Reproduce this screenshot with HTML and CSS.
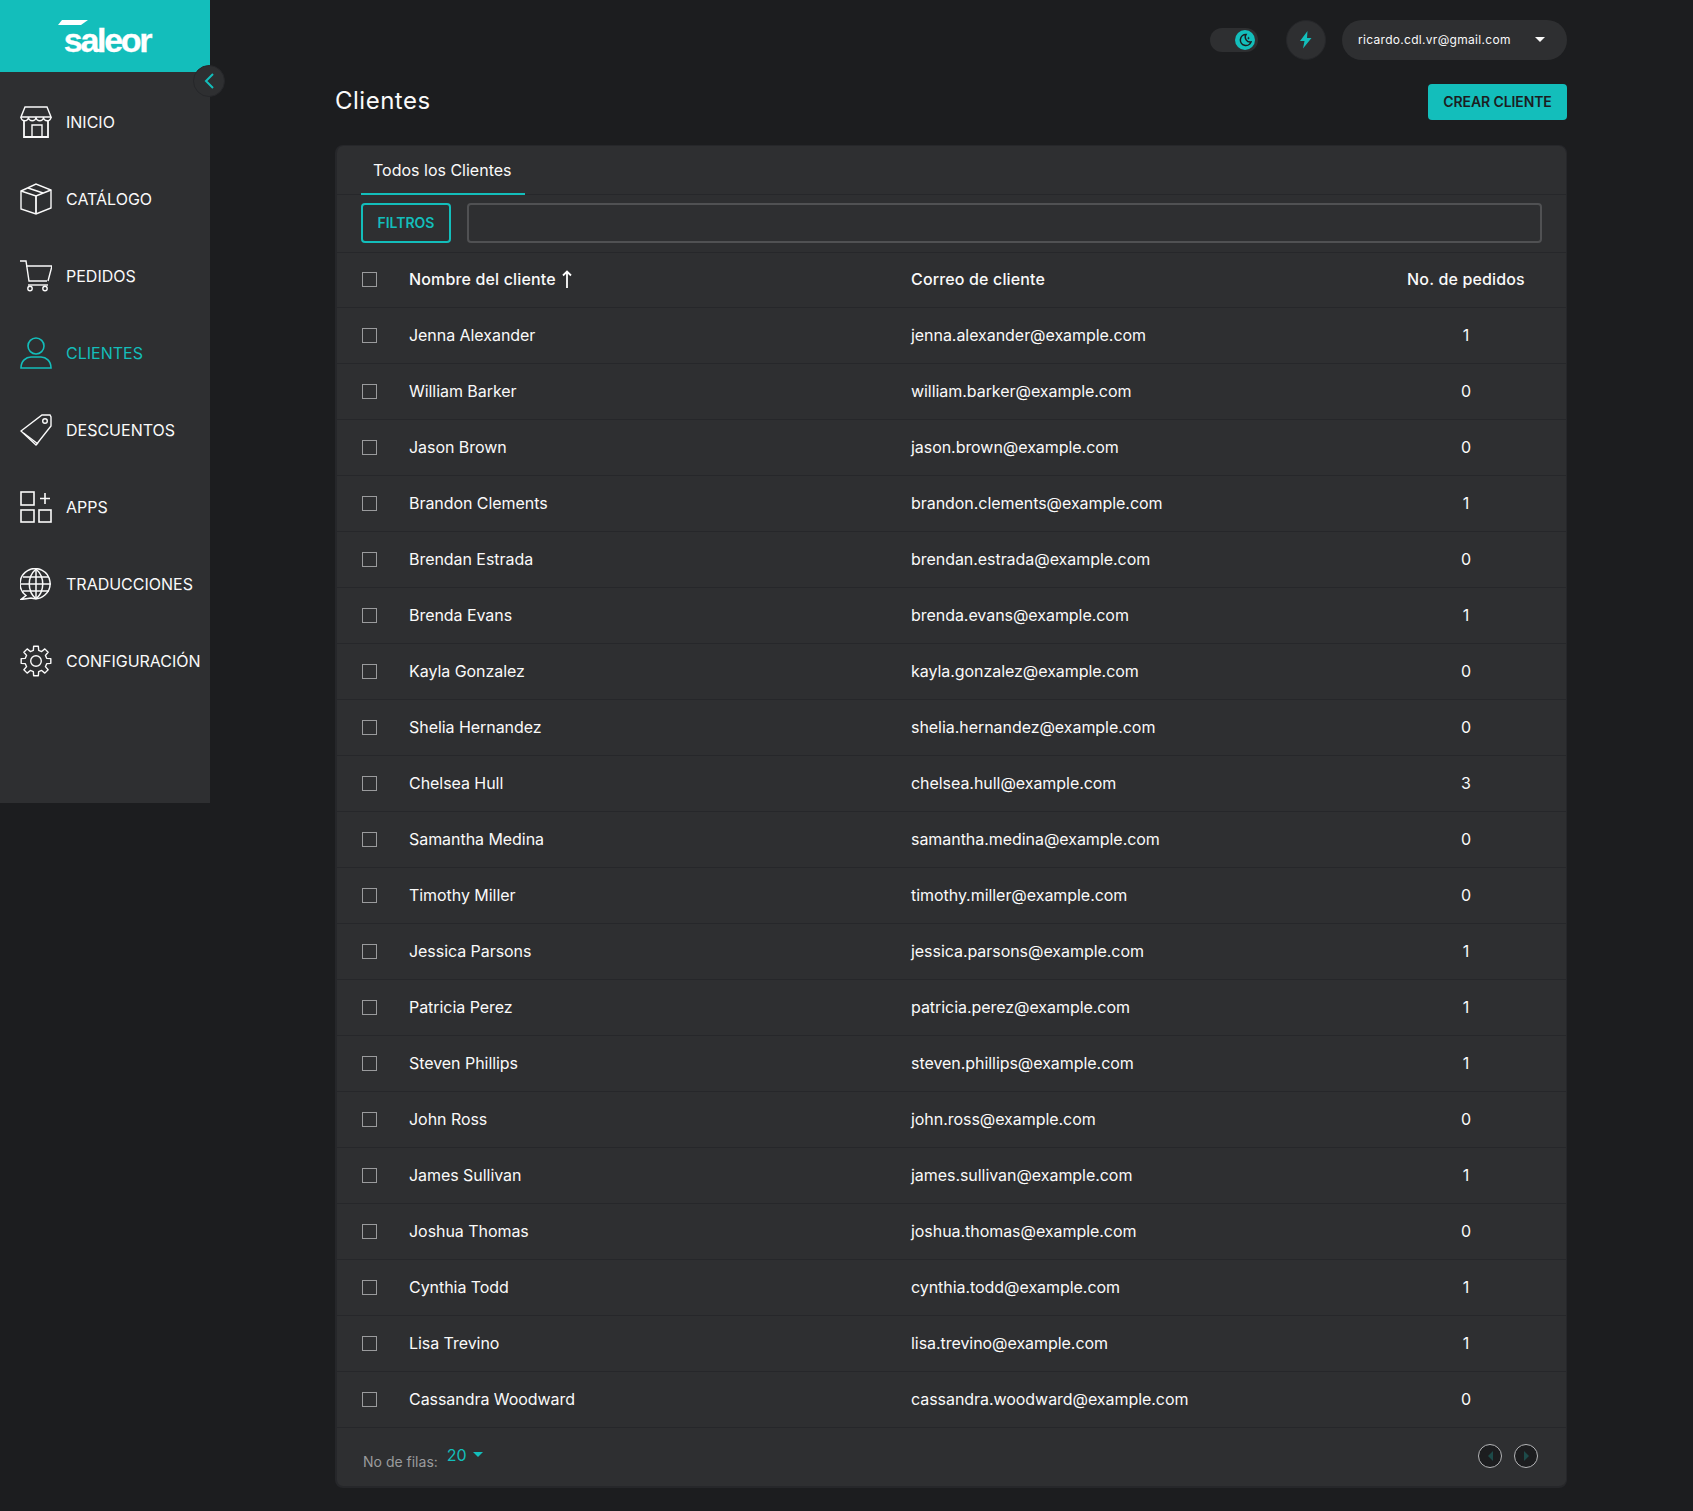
FILE: index.html
```html
<!DOCTYPE html>
<html lang="es">
<head>
    <meta charset="UTF-8">
    <meta name="viewport" content="width=device-width, initial-scale=1.0">
    <title>Clientes - Saleor</title>
    <link rel="stylesheet" href="styles.css">
</head>
<body>
    <div class="layout">
        <aside class="sidebar">
            <div class="logo">
                <svg class="logo-mark" width="32" height="6" viewBox="0 0 32 6"><polygon points="5,0 31,0 24,5 1,5" fill="#fff"/></svg>
                <span class="logo-text">saleor</span>
            </div>
            <button class="collapse-btn">
                <svg width="14" height="18" viewBox="0 0 14 18"><path d="M11 2 L4 9 L11 16" fill="none" stroke="#13bebb" stroke-width="2"/></svg>
            </button>
            <nav class="menu">
                <a class="menu-item">
                    <svg class="menu-icon" viewBox="0 0 32 32" fill="none" stroke="currentColor" stroke-width="1.4">
                        <path d="M5 1h22l4 10H1z"/>
                        <path d="M1 11a3.750 3.750 0 0 0 7.500 0a3.750 3.750 0 0 0 7.500 0a3.750 3.750 0 0 0 7.500 0a3.750 3.750 0 0 0 7.500 0"/>
                        <path d="M4 15v16h24V15" stroke-width="1.8"/>
                        <path d="M12 31V19h10v12"/>
                    </svg>
                    <span>INICIO</span>
                </a>
                <a class="menu-item">
                    <svg class="menu-icon" viewBox="0 0 32 32" fill="none" stroke="currentColor" stroke-width="1.4">
                        <path d="M1 8L16 1l15 6v18l-15 6-15-5z"/>
                        <path d="M1 8l15 5 15-6M8 5l15 5"/>
                        <path d="M16 13v18" stroke-width="1.8"/>
                    </svg>
                    <span>CATÁLOGO</span>
                </a>
                <a class="menu-item">
                    <svg class="menu-icon" viewBox="0 0 32 32" fill="none" stroke="currentColor" stroke-width="1.4">
                        <path d="M0 1h6l3 20h18"/>
                        <path d="M6 6h26l-4 15"/>
                        <path d="M8 25h20"/>
                        <circle cx="10" cy="28.500" r="2.200"/>
                        <circle cx="25" cy="28.500" r="2.200"/>
                    </svg>
                    <span>PEDIDOS</span>
                </a>
                <a class="menu-item active">
                    <svg class="menu-icon" viewBox="0 0 32 32" fill="none" stroke="currentColor" stroke-width="1.6">
                        <circle cx="16" cy="9" r="8"/>
                        <path d="M1 31c0-7 5-11 10-11h10c5 0 10 4 10 11z"/>
                    </svg>
                    <span>CLIENTES</span>
                </a>
                <a class="menu-item">
                    <svg class="menu-icon" viewBox="0 0 32 32" fill="none" stroke="currentColor" stroke-width="1.4">
                        <path d="M1 17L22 1h8l1 2v9L16 31z"/>
                        <path d="M3.500 19L18 30"/>
                        <circle cx="25" cy="7" r="2.300"/>
                    </svg>
                    <span>DESCUENTOS</span>
                </a>
                <a class="menu-item">
                    <svg class="menu-icon" viewBox="0 0 32 32" fill="none" stroke="currentColor" stroke-width="1.6">
                        <rect x="1" y="1" width="13" height="13"/>
                        <rect x="1" y="19" width="13" height="12"/>
                        <rect x="19" y="19" width="12" height="12"/>
                        <path d="M25 2v11M20 7.500h10"/>
                    </svg>
                    <span>APPS</span>
                </a>
                <a class="menu-item">
                    <svg class="menu-icon" viewBox="0 0 32 32" fill="none" stroke="currentColor" stroke-width="1.5">
                        <path d="M6 27.500A15 15 0 1 1 11 30L1 31.500z"/>
                        <path d="M16 1v30M1 16h30M3 9h26M3 23h26"/>
                        <path d="M16 1c-9 8-9 22 0 30M16 1c9 8 9 22 0 30"/>
                    </svg>
                    <span>TRADUCCIONES</span>
                </a>
                <a class="menu-item">
                    <svg class="menu-icon" viewBox="0 0 32 32" fill="none" stroke="currentColor" stroke-width="1.4" stroke-linejoin="round">
                        <path d="M13.340 5.330L13.650 1.180H18.350L18.660 5.330L21.660 6.570L24.820 3.870L28.130 7.180L25.430 10.340L26.670 13.340L30.820 13.650V18.350L26.670 18.660L25.430 21.660L28.130 24.820L24.820 28.130L21.660 25.430L18.660 26.670L18.350 30.820H13.650L13.340 26.670L10.340 25.430L7.180 28.130L3.870 24.820L6.570 21.660L5.330 18.660L1.180 18.350V13.650L5.330 13.340L6.570 10.340L3.870 7.180L7.180 3.870L10.340 6.570z"/>
                        <circle cx="16" cy="16" r="5.300"/>
                    </svg>
                    <span>CONFIGURACIÓN</span>
                </a>
            </nav>
        </aside>

        <main class="content">
            <div class="topbar">
                <div class="theme-toggle">
                    <span class="toggle-knob">
                        <svg width="14" height="14" viewBox="0 0 14 14"><path d="M8 1.500a5.500 5.500 0 1 0 5 7.500a5 5 0 0 1-5-7.500z" fill="none" stroke="#1c1d1f" stroke-width="1.500"/><path d="M10.500 3.500l.5 1.200 1.200.4-1.200.4-.5 1.200-.5-1.200-1.200-.4 1.200-.4z" fill="#1c1d1f"/></svg>
                    </span>
                </div>
                <button class="bolt-btn">
                    <svg width="12" height="18" viewBox="0 0 12 18"><path d="M7.500 0L0 10h4.500L3 17.500 11.500 7H7z" fill="#13bebb"/></svg>
                </button>
                <div class="user-pill">
                    <span>ricardo.cdl.vr@gmail.com</span>
                    <span class="caret"></span>
                </div>
            </div>

            <div class="page-header">
                <h1>Clientes</h1>
                <button class="create-btn">CREAR CLIENTE</button>
            </div>

            <section class="card">
                <div class="tabs">
                    <div class="tab">Todos los Clientes</div>
                </div>
                <div class="filter-bar">
                    <button class="filter-btn">FILTROS</button>
                    <input class="search" type="text">
                </div>
                <table class="customers">
                    <thead>
                        <tr>
                            <th class="col-check"><span class="checkbox"></span></th>
                            <th class="col-name">Nombre del cliente <svg class="sort-arrow" width="10" height="18" viewBox="0 0 10 18"><path d="M5 18V2M1 5.500L5 1.500l4 4" fill="none" stroke="#fff" stroke-width="1.800"/></svg></th>
                            <th class="col-email">Correo de cliente</th>
                            <th class="col-orders">No. de pedidos</th>
                        </tr>
                    </thead>
                    <tbody>
                        <tr><td><span class="checkbox"></span></td><td>Jenna Alexander</td><td>jenna.alexander@example.com</td><td class="num">1</td></tr>
                        <tr><td><span class="checkbox"></span></td><td>William Barker</td><td>william.barker@example.com</td><td class="num">0</td></tr>
                        <tr><td><span class="checkbox"></span></td><td>Jason Brown</td><td>jason.brown@example.com</td><td class="num">0</td></tr>
                        <tr><td><span class="checkbox"></span></td><td>Brandon Clements</td><td>brandon.clements@example.com</td><td class="num">1</td></tr>
                        <tr><td><span class="checkbox"></span></td><td>Brendan Estrada</td><td>brendan.estrada@example.com</td><td class="num">0</td></tr>
                        <tr><td><span class="checkbox"></span></td><td>Brenda Evans</td><td>brenda.evans@example.com</td><td class="num">1</td></tr>
                        <tr><td><span class="checkbox"></span></td><td>Kayla Gonzalez</td><td>kayla.gonzalez@example.com</td><td class="num">0</td></tr>
                        <tr><td><span class="checkbox"></span></td><td>Shelia Hernandez</td><td>shelia.hernandez@example.com</td><td class="num">0</td></tr>
                        <tr><td><span class="checkbox"></span></td><td>Chelsea Hull</td><td>chelsea.hull@example.com</td><td class="num">3</td></tr>
                        <tr><td><span class="checkbox"></span></td><td>Samantha Medina</td><td>samantha.medina@example.com</td><td class="num">0</td></tr>
                        <tr><td><span class="checkbox"></span></td><td>Timothy Miller</td><td>timothy.miller@example.com</td><td class="num">0</td></tr>
                        <tr><td><span class="checkbox"></span></td><td>Jessica Parsons</td><td>jessica.parsons@example.com</td><td class="num">1</td></tr>
                        <tr><td><span class="checkbox"></span></td><td>Patricia Perez</td><td>patricia.perez@example.com</td><td class="num">1</td></tr>
                        <tr><td><span class="checkbox"></span></td><td>Steven Phillips</td><td>steven.phillips@example.com</td><td class="num">1</td></tr>
                        <tr><td><span class="checkbox"></span></td><td>John Ross</td><td>john.ross@example.com</td><td class="num">0</td></tr>
                        <tr><td><span class="checkbox"></span></td><td>James Sullivan</td><td>james.sullivan@example.com</td><td class="num">1</td></tr>
                        <tr><td><span class="checkbox"></span></td><td>Joshua Thomas</td><td>joshua.thomas@example.com</td><td class="num">0</td></tr>
                        <tr><td><span class="checkbox"></span></td><td>Cynthia Todd</td><td>cynthia.todd@example.com</td><td class="num">1</td></tr>
                        <tr><td><span class="checkbox"></span></td><td>Lisa Trevino</td><td>lisa.trevino@example.com</td><td class="num">1</td></tr>
                        <tr><td><span class="checkbox"></span></td><td>Cassandra Woodward</td><td>cassandra.woodward@example.com</td><td class="num">0</td></tr>
                    </tbody>
                </table>
                <div class="card-footer">
                    <div class="rows-per-page">
                        <span class="rows-label">No de filas:</span>
                        <span class="rows-value">20</span>
                        <span class="caret caret-teal"></span>
                    </div>
                    <div class="pager">
                        <button class="page-btn"><span class="tri-left"></span></button>
                        <button class="page-btn"><span class="tri-right"></span></button>
                    </div>
                </div>
            </section>
        </main>
    </div>
</body>
</html>
```

FILE: styles.css
```css
* {
    box-sizing: border-box;
}

body {
    margin: 0;
    background-color: #1c1d1f;
    color: #fafafa;
    font-family: Inter, "Liberation Sans", sans-serif;
    font-size: 16px;
}

.layout {
    display: flex;
    align-items: flex-start;
}

/* barra lateral */
.sidebar {
    position: relative;
    flex: 0 0 210px;
    height: 803px;
    background-color: #2e2f31;
}

.logo {
    height: 72px;
    background-color: #13bebb;
    display: flex;
    flex-direction: column;
    align-items: center;
    padding-top: 20px;
    color: #fff;
}

.logo-mark {
    display: block;
    margin-left: -64px;
}

.logo-text {
    font-family: "Liberation Sans", sans-serif;
    font-weight: 700;
    font-size: 34px;
    line-height: 26px;
    letter-spacing: -2.3px;
    margin-top: 1px;
    margin-left: 4px;
    -webkit-text-stroke: 0.3px #fff;
}

.collapse-btn {
    position: absolute;
    top: 65px;
    left: 193px;
    width: 32px;
    height: 32px;
    border-radius: 50%;
    border: 1px solid #26272a;
    background-color: #2e2f31;
    padding: 0;
    display: flex;
    align-items: center;
    justify-content: center;
}

.menu {
    padding-top: 11px;
}

.menu-item {
    display: flex;
    align-items: center;
    height: 77px;
    padding-left: 20px;
    font-size: 16px;
    color: #fafafa;
}

.menu-item.active {
    color: #13bebb;
}

.menu-icon {
    width: 32px;
    height: 32px;
    margin-right: 14px;
    flex: none;
}

/* contenido */
.content {
    flex: 1;
    padding: 20px 126px 0 125px;
}

.topbar {
    display: flex;
    justify-content: flex-end;
    align-items: center;
    height: 40px;
}

.theme-toggle {
    width: 48px;
    height: 24px;
    border-radius: 12px;
    background-color: #2e2f31;
    display: flex;
    align-items: center;
    justify-content: flex-end;
    padding-right: 3px;
    margin-right: 28px;
}

.toggle-knob {
    width: 20px;
    height: 20px;
    border-radius: 50%;
    background-color: #13bebb;
    display: flex;
    align-items: center;
    justify-content: center;
}

.bolt-btn {
    width: 40px;
    height: 40px;
    border-radius: 50%;
    border: 1px solid #26272a;
    background-color: #2e2f31;
    padding: 0;
    margin-right: 16px;
    display: flex;
    align-items: center;
    justify-content: center;
}

.user-pill {
    width: 225px;
    height: 40px;
    border-radius: 20px;
    background-color: #2e2f31;
    display: flex;
    align-items: center;
    justify-content: space-between;
    padding: 0 22px 1px 16px;
    font-size: 12px;
    letter-spacing: 0.3px;
    color: #fafafa;
}

.caret {
    display: inline-block;
    width: 0;
    height: 0;
    border-left: 5px solid transparent;
    border-right: 5px solid transparent;
    border-top: 5px solid #fafafa;
}

.caret-teal {
    border-top-color: #13bebb;
    margin-left: 6px;
    align-self: flex-start;
    margin-top: 8px;
}

.page-header {
    display: flex;
    justify-content: space-between;
    align-items: center;
    height: 36px;
    margin-top: 24px;
}

h1 {
    margin: 0 0 4px;
    font-size: 24px;
    font-weight: 400;
    letter-spacing: 0.5px;
    color: #fafafa;
}

.create-btn {
    width: 139px;
    height: 36px;
    border: none;
    border-radius: 4px;
    background-color: #13bebb;
    color: #1c1d1f;
    font-family: inherit;
    font-size: 14px;
    font-weight: 600;
    letter-spacing: -0.1px;
    padding: 0 0 1px;
}

.card {
    margin-top: 25px;
    background-color: #2e2f31;
    border-radius: 8px;
    border: 1px solid #26272a;
    border-width: 1px 1px 2px 2px;
}

.tabs {
    height: 49px;
    padding-left: 24px;
    border-bottom: 1px solid #26272a;
}

.tab {
    width: 164px;
    height: 49px;
    padding: 15px 0 0 12px;
    border-bottom: 2px solid #13bebb;
    font-size: 16px;
    line-height: 19px;
}

.filter-bar {
    display: flex;
    gap: 16px;
    height: 58px;
    padding: 8px 24px 0 24px;
    border-bottom: 1px solid #26272a;
}

.filter-btn {
    width: 90px;
    height: 40px;
    border: 2px solid #13bebb;
    border-radius: 4px;
    background: none;
    color: #13bebb;
    font-family: inherit;
    font-size: 14px;
    font-weight: 600;
    padding: 0 0 1px;
}

.search {
    flex: 1;
    height: 40px;
    background: none;
    border: 2px solid #505153;
    border-radius: 4px;
}

.customers {
    width: 100%;
    border-collapse: collapse;
    table-layout: fixed;
}

.customers th,
.customers td {
    height: 56px;
    padding: 0;
    border-bottom: 1px solid #26272a;
    text-align: left;
    font-size: 16px;
    letter-spacing: -0.05px;
    color: #fafafa;
    font-weight: 400;
}

.customers th {
    height: 54px;
    padding-bottom: 2px;
    font-weight: 500;
    letter-spacing: 0.15px;
}

.customers .col-check {
    width: 72px;
    padding-left: 25px;
    padding-bottom: 0;
}

.customers td:first-child {
    padding-left: 25px;
}

.col-name {
    width: 502px;
}

.col-orders {
    width: 202px;
}

.customers .col-orders,
.customers .num {
    text-align: center;
    padding-left: 2px;
}

.checkbox {
    display: block;
    width: 15px;
    height: 15px;
    border: 1px solid #9a9b9d;
}

.sort-arrow {
    vertical-align: -3px;
    margin-left: 2px;
}

.card-footer {
    display: flex;
    justify-content: space-between;
    height: 58px;
    padding: 16px 28px 0 26px;
}

.rows-per-page {
    display: flex;
    align-items: flex-start;
    height: 24px;
}

.rows-label {
    font-size: 14px;
    color: #9a9b9d;
    margin-top: 9px;
    margin-right: 9px;
}

.rows-value {
    font-size: 16px;
    color: #13bebb;
    line-height: 20px;
    margin-top: 1px;
}

.pager {
    display: flex;
    gap: 12px;
}

.page-btn {
    width: 24px;
    height: 24px;
    border-radius: 50%;
    border: 1px solid #b5b6b8;
    background-color: #1c1d1f;
    padding: 0;
    display: flex;
    align-items: center;
    justify-content: center;
}

.tri-left,
.tri-right {
    width: 0;
    height: 0;
    border-top: 5px solid transparent;
    border-bottom: 5px solid transparent;
}

.tri-left {
    border-right: 5px solid #1d4a49;
}

.tri-right {
    border-left: 5px solid #1d4a49;
}
```
